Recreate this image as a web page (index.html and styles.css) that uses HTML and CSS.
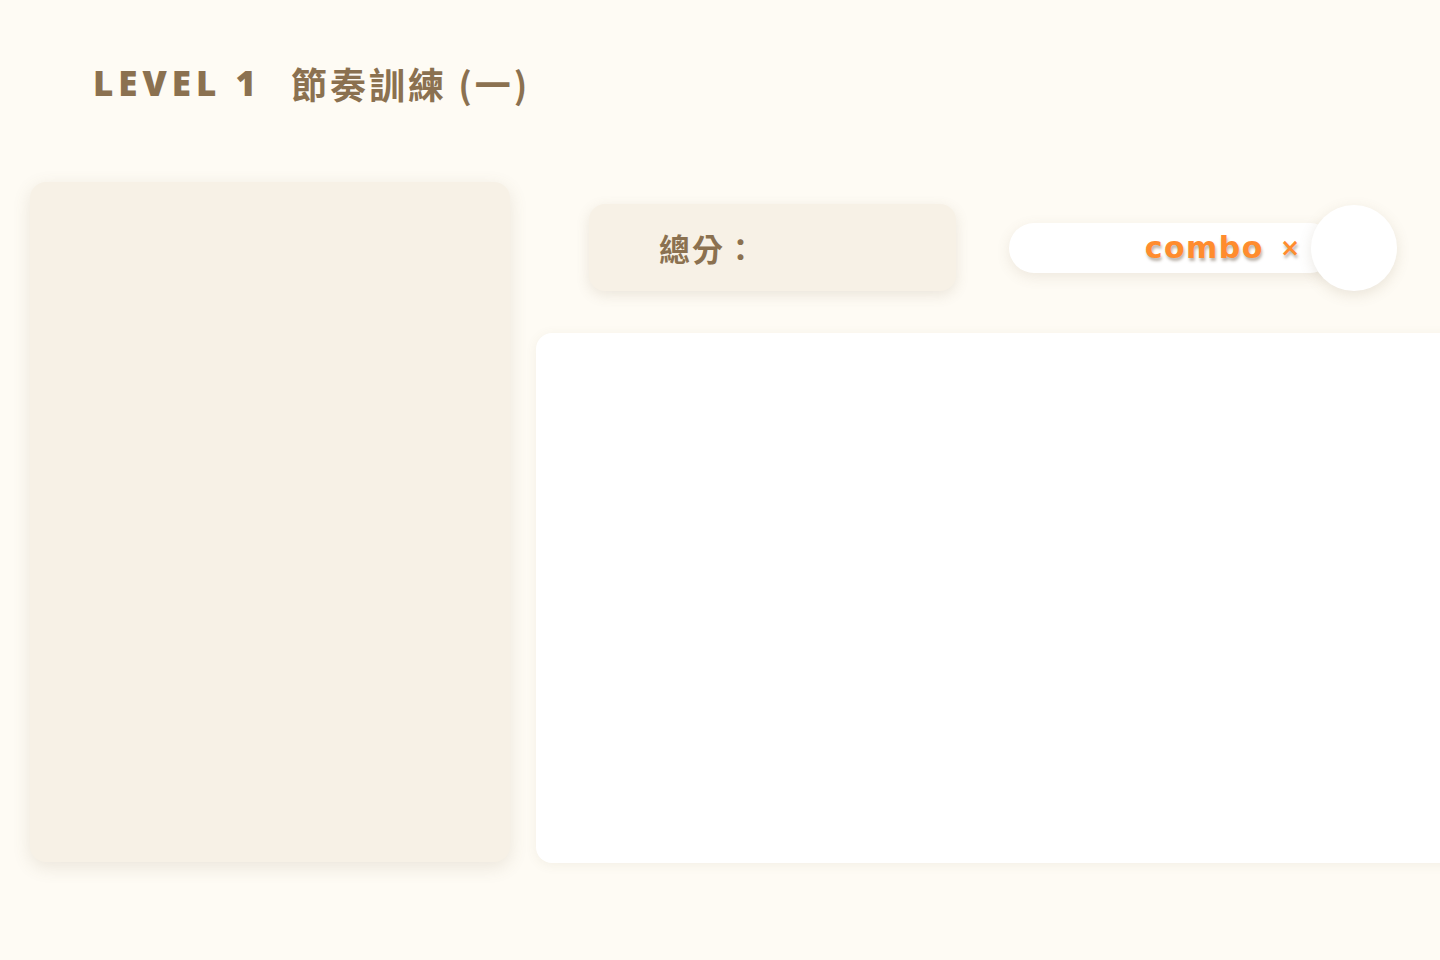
FILE: index.html
```html
<!DOCTYPE html>
<html lang="zh-Hant">
<head>
<meta charset="utf-8">
<title>LEVEL 1 節奏訓練 (一)</title>
<link rel="stylesheet" href="styles.css">
</head>
<body>
  <header class="header">
    <h1 class="title"><span class="level">LEVEL 1</span><span class="name">節奏訓練 (一)</span></h1>
  </header>
  <main class="main">
    <aside class="side-panel"></aside>
    <section class="stage">
      <div class="top-row">
        <div class="score-box"><span class="score-label">總分：</span></div>
        <div class="combo">
          <div class="combo-bar"><span class="combo-text">combo</span><span class="combo-x">×</span></div>
          <div class="combo-circle"></div>
        </div>
      </div>
      <div class="board"></div>
    </section>
  </main>
</body>
</html>
```
FILE: styles.css
```css
html, body {
  margin: 0;
  padding: 0;
}
body {
  width: 1440px;
  height: 960px;
  overflow: hidden;
  background: #fefbf4;
  font-family: "Noto Sans", "Noto Sans CJK TC", sans-serif;
  color: #8b7150;
}
.header {
  padding: 58px 0 0 93px;
  height: 124px;
  box-sizing: border-box;
}
.title {
  margin: 0;
  font-size: 36px;
  line-height: 50px;
  font-weight: 700;
  display: flex;
  align-items: center;
  gap: 30px;
}
.level {
  font-family: "Open Sans", "Noto Sans", sans-serif;
  font-weight: 800;
  letter-spacing: 5px;
  font-size: 35px;
}
.name {
  font-family: "Noto Sans CJK TC", sans-serif;
  letter-spacing: 3px;
  font-size: 36px;
}
.main {
  display: flex;
  gap: 26px;
  padding: 58px 0 0 30px;
}
.side-panel {
  flex: none;
  width: 480px;
  height: 680px;
  background: #f7f1e6;
  border-radius: 16px;
  box-shadow: 0 5px 18px rgba(120, 100, 70, 0.14);
}
.stage {
  flex: none;
  width: 1000px;
  display: flex;
  flex-direction: column;
}
.top-row {
  display: flex;
  align-items: center;
  margin-top: 22px;
  height: 87px;
  padding-left: 53px;
  gap: 53px;
}
.score-box {
  width: 367px;
  height: 87px;
  box-sizing: border-box;
  background: #f7f1e6;
  border-radius: 16px;
  box-shadow: 0 4px 14px rgba(120, 100, 70, 0.14);
  display: flex;
  align-items: center;
  padding-left: 70px;
}
.score-label {
  font-family: "Noto Sans CJK TC", sans-serif;
  font-size: 31px;
  font-weight: 700;
  letter-spacing: 2px;
  color: #8b7150;
}
.combo {
  display: flex;
  align-items: center;
}
.combo-bar {
  width: 326px;
  height: 50px;
  box-sizing: border-box;
  background: #ffffff;
  border-radius: 25px;
  box-shadow: 0 4px 14px rgba(120, 100, 70, 0.12);
  display: flex;
  align-items: center;
  justify-content: flex-end;
  padding-right: 35px;
  gap: 16px;
}
.combo-text,
.combo-x {
  font-family: "DejaVu Sans", sans-serif;
  font-weight: 700;
  color: #ff8c2e;
  text-shadow: 1px 3px 3px rgba(90, 70, 50, 0.4);
  line-height: 1;
}
.combo-text {
  font-size: 30px;
  letter-spacing: 1.5px;
}
.combo-x {
  font-size: 24px;
}
.combo-circle {
  width: 86px;
  height: 86px;
  margin-left: -24px;
  border-radius: 50%;
  background: #ffffff;
  box-shadow: 0 4px 14px rgba(120, 100, 70, 0.15);
}
.board {
  margin-top: 42px;
  width: 1000px;
  height: 530px;
  background: #ffffff;
  border-radius: 16px;
  box-shadow: 0 2px 12px rgba(120, 100, 70, 0.08);
}
```
